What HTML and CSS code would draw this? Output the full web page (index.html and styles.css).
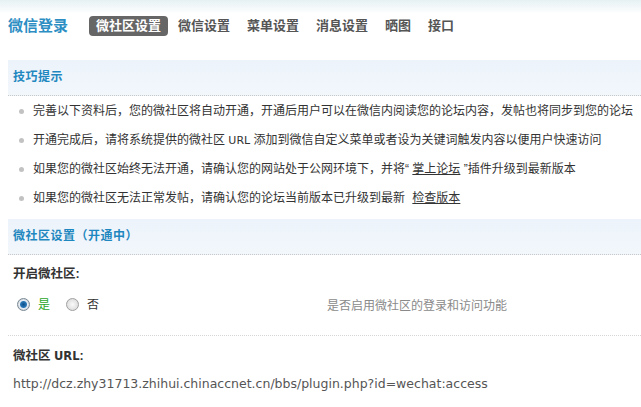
FILE: index.html
```html
<!DOCTYPE html>
<html lang="zh-CN">

<head>
    <meta charset="UTF-8">
    <title>微信登录</title>
    <link rel="stylesheet" href="styles.css">
</head>

<body>
    <!-- 顶部标题和导航 -->
    <div class="top">
        <h2 class="title">微信登录</h2>
        <ul class="tabs">
            <li class="tab active">微社区设置</li>
            <li class="tab">微信设置</li>
            <li class="tab">菜单设置</li>
            <li class="tab">消息设置</li>
            <li class="tab">晒图</li>
            <li class="tab">接口</li>
        </ul>
    </div>

    <div class="main">
        <!-- 技巧提示 -->
        <div class="head">技巧提示</div>
        <ul class="tips">
            <li>完善以下资料后，您的微社区将自动开通，开通后用户可以在微信内阅读您的论坛内容，发帖也将同步到您的论坛</li>
            <li>开通完成后，请将系统提供的微社区 <span class="en">URL</span> 添加到微信自定义菜单或者设为关键词触发内容以便用户快速访问</li>
            <li>如果您的微社区始终无法开通，请确认您的网站处于公网环境下，并将“ <a href="#">掌上论坛</a> ”插件升级到最新版本</li>
            <li>如果您的微社区无法正常发帖，请确认您的论坛当前版本已升级到最新 <a href="#" class="check">检查版本</a></li>
        </ul>

        <!-- 微社区设置 -->
        <div class="head head2">微社区设置（开通中）</div>
        <div class="label">开启微社区:</div>
        <div class="row">
            <div class="radios">
                <span class="radio checked"></span><span class="yes">是</span>
                <span class="radio"></span><span class="no">否</span>
            </div>
            <div class="desc">是否启用微社区的登录和访问功能</div>
        </div>
        <div class="label url-label">微社区 <span class="en">URL</span>:</div>
        <div class="url">http://dcz.zhy31713.zhihui.chinaccnet.cn/bbs/plugin.php?id=wechat:access</div>
    </div>
</body>

</html>
```

FILE: styles.css
```css
* {
    margin: 0;
    padding: 0;
}

body {
    font: 12px "Liberation Sans", "Noto Sans CJK SC", sans-serif;
    color: #333;
    background: #fff;
    overflow: hidden;
}

ul {
    list-style: none;
}

.top {
    display: flex;
    align-items: center;
    padding: 16px 0 0 8px;
    background: linear-gradient(#e6f1f4, #fff 14px);
}

.title {
    font-size: 15px;
    line-height: 20px;
    color: #2c8ec3;
    margin-right: 21px;
}

.tabs {
    display: flex;
}

.tab {
    font-size: 13px;
    font-weight: bold;
    line-height: 20px;
    padding: 0 7px;
    margin-right: 3px;
    color: #555;
    border-radius: 4px;
}

.tab.active {
    background: #666;
    color: #fff;
}

.main {
    margin-left: 8px;
}

.head {
    margin-top: 24px;
    height: 35px;
    line-height: 35px;
    padding-left: 5px;
    font-weight: bold;
    font-size: 12px;
    letter-spacing: 0.5px;
    color: #1e87bf;
    background: linear-gradient(#ecf3fa, #f2f7fc);
    border-bottom: 1px dotted #c8c8c8;
}

.head2 {
    margin-top: 6px;
}

.tips {
    padding-top: 1px;
}

.tips li {
    position: relative;
    line-height: 29px;
    padding-left: 25px;
    white-space: nowrap;
}

.tips li::before {
    content: "";
    position: absolute;
    left: 11px;
    top: 12px;
    width: 5px;
    height: 5px;
    border-radius: 50%;
    background: #c2c2c2;
}

.en {
    font-family: "DejaVu Sans", sans-serif;
    font-size: 11px;
}

.tips a {
    color: #333;
}

.tips .check {
    margin-left: 4px;
}

.label {
    margin-top: 9px;
    line-height: 20px;
    padding-left: 5px;
    font-weight: bold;
    font-size: 12.5px;
}

.label .en {
    font-size: 11.5px;
}

.row {
    display: flex;
    align-items: center;
    margin-top: 9px;
    padding-bottom: 19px;
    line-height: 20px;
    border-bottom: 1px dotted #d6d6d6;
}

.radios {
    display: flex;
    align-items: center;
    width: 310px;
    padding-left: 9px;
}

.radio {
    width: 11px;
    height: 11px;
    border-radius: 50%;
    border: 1px solid #a0a0a0;
    background: radial-gradient(#fafafa, #d4d4d4);
}

.radio.checked {
    background: radial-gradient(circle, #0d4f86 0, #2a78b8 3px, #e8eef4 4px, #c8d0d8 6px);
    border-color: #7a8894;
}

.yes {
    color: #2aa52a;
    margin: 0 16px 0 8px;
}

.no {
    margin-left: 8px;
}

.desc {
    color: #8a8a8a;
    padding-top: 3px;
}

.url-label {
    margin-top: 10px;
}

.url {
    margin-top: 8px;
    padding-left: 5px;
    line-height: 20px;
    color: #555;
    font-family: "DejaVu Sans", sans-serif;
    font-size: 12.5px;
}
```
